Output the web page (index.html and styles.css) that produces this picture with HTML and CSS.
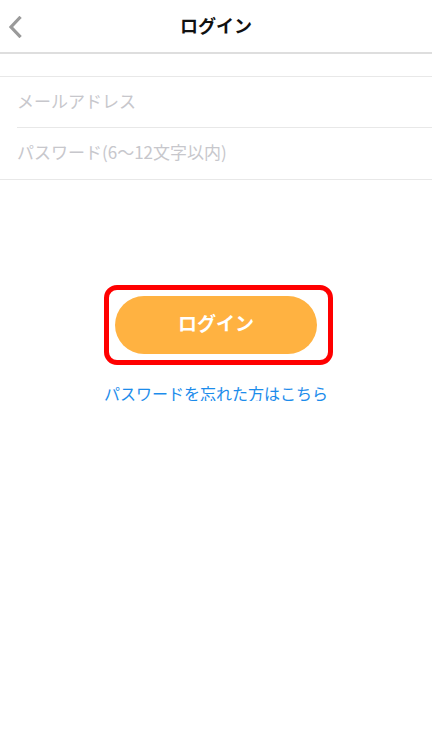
FILE: index.html
```html
<!DOCTYPE html>
<html lang="ja">
<head>
<meta charset="utf-8">
<title>ログイン</title>
<link rel="stylesheet" href="styles.css">
</head>
<body>
<header class="nav">
  <span class="back">
    <svg width="14" height="22" viewBox="0 0 14 22"><path d="M11.5 2 L3 11 L11.5 20" fill="none" stroke="#9a9a9a" stroke-width="3.2" stroke-linecap="square" stroke-linejoin="miter"/></svg>
  </span>
  <h1 class="title">ログイン</h1>
</header>
<div class="spacer"></div>
<section class="form">
  <div class="row indent"><span class="placeholder">メールアドレス</span></div>
  <div class="row"><span class="placeholder">パスワード(6〜12文字以内)</span></div>
</section>
<div class="actions">
  <div class="highlight">
    <button class="btn">ログイン</button>
  </div>
  <a class="link" href="#">パスワードを忘れた方はこちら</a>
</div>
</body>
</html>
```
FILE: styles.css
```css
* { box-sizing: border-box; }
html, body {
  margin: 0;
  padding: 0;
  background: #fff;
  font-family: "Noto Sans CJK JP", "Noto Sans", sans-serif;
}
.nav {
  position: relative;
  height: 54px;
  border-bottom: 2px solid #dedede;
  display: flex;
  align-items: center;
  justify-content: center;
}
.back {
  position: absolute;
  left: 8px;
  top: 16px;
  display: flex;
}
.title {
  margin: 0;
  font-size: 18px;
  font-weight: 700;
  color: #111;
  line-height: 1;
  margin-top: -2px;
}
.spacer {
  height: 23px;
  border-bottom: 1px solid #e8e8e8;
}
.form {
  border-bottom: 1px solid #e8e8e8;
}
.row {
  height: 51px;
  display: flex;
  align-items: center;
  padding-left: 17px;
}
.row.indent {
  position: relative;
}
.row.indent::after {
  content: "";
  position: absolute;
  left: 17px;
  right: 0;
  bottom: 0;
  height: 1px;
  background: #e8e8e8;
}
.placeholder {
  font-size: 17px;
  color: #c7c7cc;
  line-height: 1;
  margin-top: -4px;
}
.actions {
  display: flex;
  flex-direction: column;
  align-items: center;
  padding-top: 105px;
}
.highlight {
  border: 5px solid #ff0000;
  border-radius: 13px;
  padding: 6px 11px 6px 6px;
  width: 229px;
  height: 80px;
  margin-left: 5px;
}
.btn {
  display: block;
  width: 202px;
  height: 58px;
  border: none;
  border-radius: 29px;
  background: #ffb241;
  color: #fff;
  font-family: "Noto Sans CJK JP", sans-serif;
  font-size: 19px;
  font-weight: 700;
  line-height: 1;
  padding: 0 0 5px 0;
}
.link {
  margin-top: 20px;
  font-size: 16px;
  color: #1c8ceb;
  text-decoration: none;
  line-height: 1;
}
```
